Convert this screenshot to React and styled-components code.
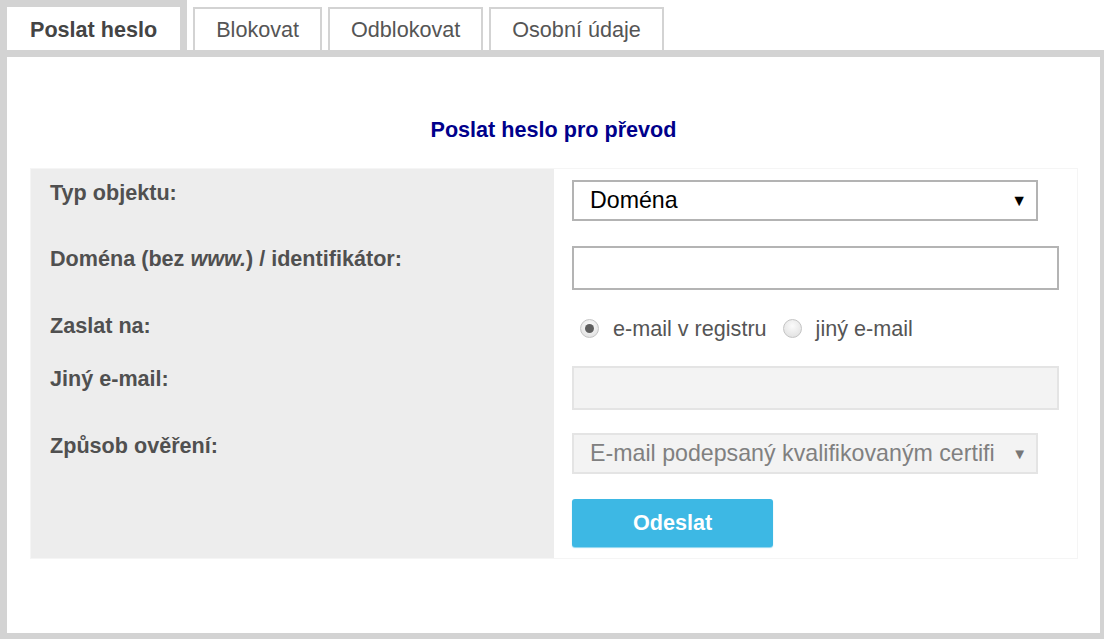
import React, { useState } from 'react'
import styled, { createGlobalStyle } from 'styled-components'

const GlobalStyle = createGlobalStyle`
  html, body {
    margin: 0;
    padding: 0;
    background: #fff;
    overflow: hidden;
  }
  body {
    font-family: "Liberation Sans", Arial, sans-serif;
    color: #555;
  }
`

const tabs = ['Poslat heslo', 'Blokovat', 'Odblokovat', 'Osobní údaje']

const App = () => {
  const [active, setActive] = useState(0)
  const [sendTo, setSendTo] = useState('registry')

  return (
    <Page>
      <GlobalStyle />
      <TabBar>
        {tabs.map((t, i) => (
          <Tab key={t} $active={i === active} onClick={() => setActive(i)}>
            {t}
          </Tab>
        ))}
      </TabBar>
      <Panel>
        <Title>Poslat heslo pro převod</Title>
        <FormGrid>
          <Label>Typ objektu:</Label>
          <Field>
            <FakeSelect>
              <span>Doména</span>
              <Arrow>▼</Arrow>
            </FakeSelect>
          </Field>

          <Label>
            Doména (bez <i>www.</i>) / identifikátor:
          </Label>
          <Field>
            <TextInput type='text' />
          </Field>

          <Label>Zaslat na:</Label>
          <Field $top={14}>
            <RadioGroup>
              <RadioOption onClick={() => setSendTo('registry')}>
                <Radio $checked={sendTo === 'registry'} />
                e-mail v registru
              </RadioOption>
              <RadioOption onClick={() => setSendTo('other')}>
                <Radio $checked={sendTo === 'other'} />
                jiný e-mail
              </RadioOption>
            </RadioGroup>
          </Field>

          <Label>Jiný e-mail:</Label>
          <Field>
            <TextInput type='text' disabled $disabled />
          </Field>

          <Label>Způsob ověření:</Label>
          <Field>
            <FakeSelect $disabled>
              <span>E-mail podepsaný kvalifikovaným certifi</span>
              <Arrow $disabled>▼</Arrow>
            </FakeSelect>
          </Field>

          <Label />
          <Field $top={12}>
            <SubmitButton>Odeslat</SubmitButton>
          </Field>
        </FormGrid>
      </Panel>
    </Page>
  )
}

export default App

const Page = styled.div`
  width: 1107px;
`

const TabBar = styled.div`
  display: flex;
  align-items: flex-end;
  gap: 6px;
  height: 50px;
`

const Tab = styled.div`
  box-sizing: border-box;
  display: flex;
  align-items: center;
  justify-content: center;
  background: #fff;
  font-size: 21.6px;
  cursor: pointer;
  border-style: solid;
  border-color: #d3d3d3;
  border-bottom: none;
  white-space: nowrap;
  height: ${p => (p.$active ? '50px' : '43px')};
  border-width: ${p => (p.$active ? '7px 7px 0 7px' : '2px 2px 0 2px')};
  padding: ${p => (p.$active ? '2px 23px 0' : '0 21px')};
  color: ${p => (p.$active ? '#444' : '#555')};
  font-weight: ${p => (p.$active ? 'bold' : 'normal')};
`

const Panel = styled.div`
  box-sizing: border-box;
  border: 7px solid #d3d3d3;
  background: #fff;
  padding: 60px 0 75px;
`

const Title = styled.h2`
  margin: 0 0 27px;
  text-align: center;
  font-size: 21.6px;
  line-height: 25px;
  font-weight: bold;
  color: #00008b;
`

const FormGrid = styled.div`
  display: grid;
  grid-template-columns: 523px 523px;
  grid-template-rows: 66px 67px 53px 67px 65px 71px;
  width: 1046px;
  margin: 0 auto 0 24px;
  outline: 1px solid #f5f5f5;
  background: linear-gradient(to right, #ededed 523px, #fff 523px);
`

const Label = styled.div`
  padding: 11px 0 0 19px;
  font-size: 21.6px;
  line-height: 25px;
  font-weight: bold;
  color: #505050;
  white-space: nowrap;

  i {
    font-style: italic;
  }
`

const Field = styled.div`
  padding: ${p => p.$top ?? 11}px 18px 0 18px;
`

const FakeSelect = styled.div`
  box-sizing: border-box;
  display: flex;
  align-items: center;
  justify-content: space-between;
  width: 466px;
  height: 41px;
  padding: 0 9px 0 16px;
  border: 2px solid ${p => (p.$disabled ? '#e4e4e4' : '#b3b3b3')};
  background: ${p => (p.$disabled ? '#f3f3f3' : '#fff')};
  color: ${p => (p.$disabled ? '#808080' : '#000')};
  font-size: 23.2px;
  white-space: nowrap;
  overflow: hidden;
`

const Arrow = styled.span`
  font-size: ${p => (p.$disabled ? '15px' : '16px')};
  color: ${p => (p.$disabled ? '#777' : '#000')};
  margin-left: 8px;
`

const TextInput = styled.input`
  box-sizing: border-box;
  display: block;
  width: 487px;
  height: 44px;
  margin: 0;
  padding: 0 12px;
  font-family: inherit;
  font-size: 21.6px;
  outline: none;
  border: 2px solid ${p => (p.$disabled ? '#e4e4e4' : '#b4b4b4')};
  background: ${p => (p.$disabled ? '#f3f3f3' : '#fff')};
`

const RadioGroup = styled.div`
  display: flex;
  align-items: center;
  gap: 16px;
  padding-left: 8px;
  font-size: 21.6px;
  line-height: 25px;
  color: #555;
`

const RadioOption = styled.label`
  display: flex;
  align-items: center;
  gap: 14px;
  cursor: pointer;
`

const Radio = styled.span`
  box-sizing: border-box;
  width: 19px;
  height: 19px;
  border-radius: 50%;
  border: 1px solid #c4c4c4;
  background: radial-gradient(circle at 50% 35%, #fbfbfb 0%, #e6e6e6 70%, #dcdcdc 100%);
  display: flex;
  align-items: center;
  justify-content: center;

  &::after {
    content: '';
    width: 9px;
    height: 9px;
    border-radius: 50%;
    background: #5e5e5e;
    display: ${p => (p.$checked ? 'block' : 'none')};
  }
`

const SubmitButton = styled.button`
  width: 201px;
  height: 48px;
  border: none;
  border-radius: 3px;
  background: #3db8e4;
  color: #fff;
  font-family: inherit;
  font-size: 21.6px;
  font-weight: bold;
  cursor: pointer;
  box-shadow: 0 1px 1px rgba(61, 184, 228, 0.6);
`
